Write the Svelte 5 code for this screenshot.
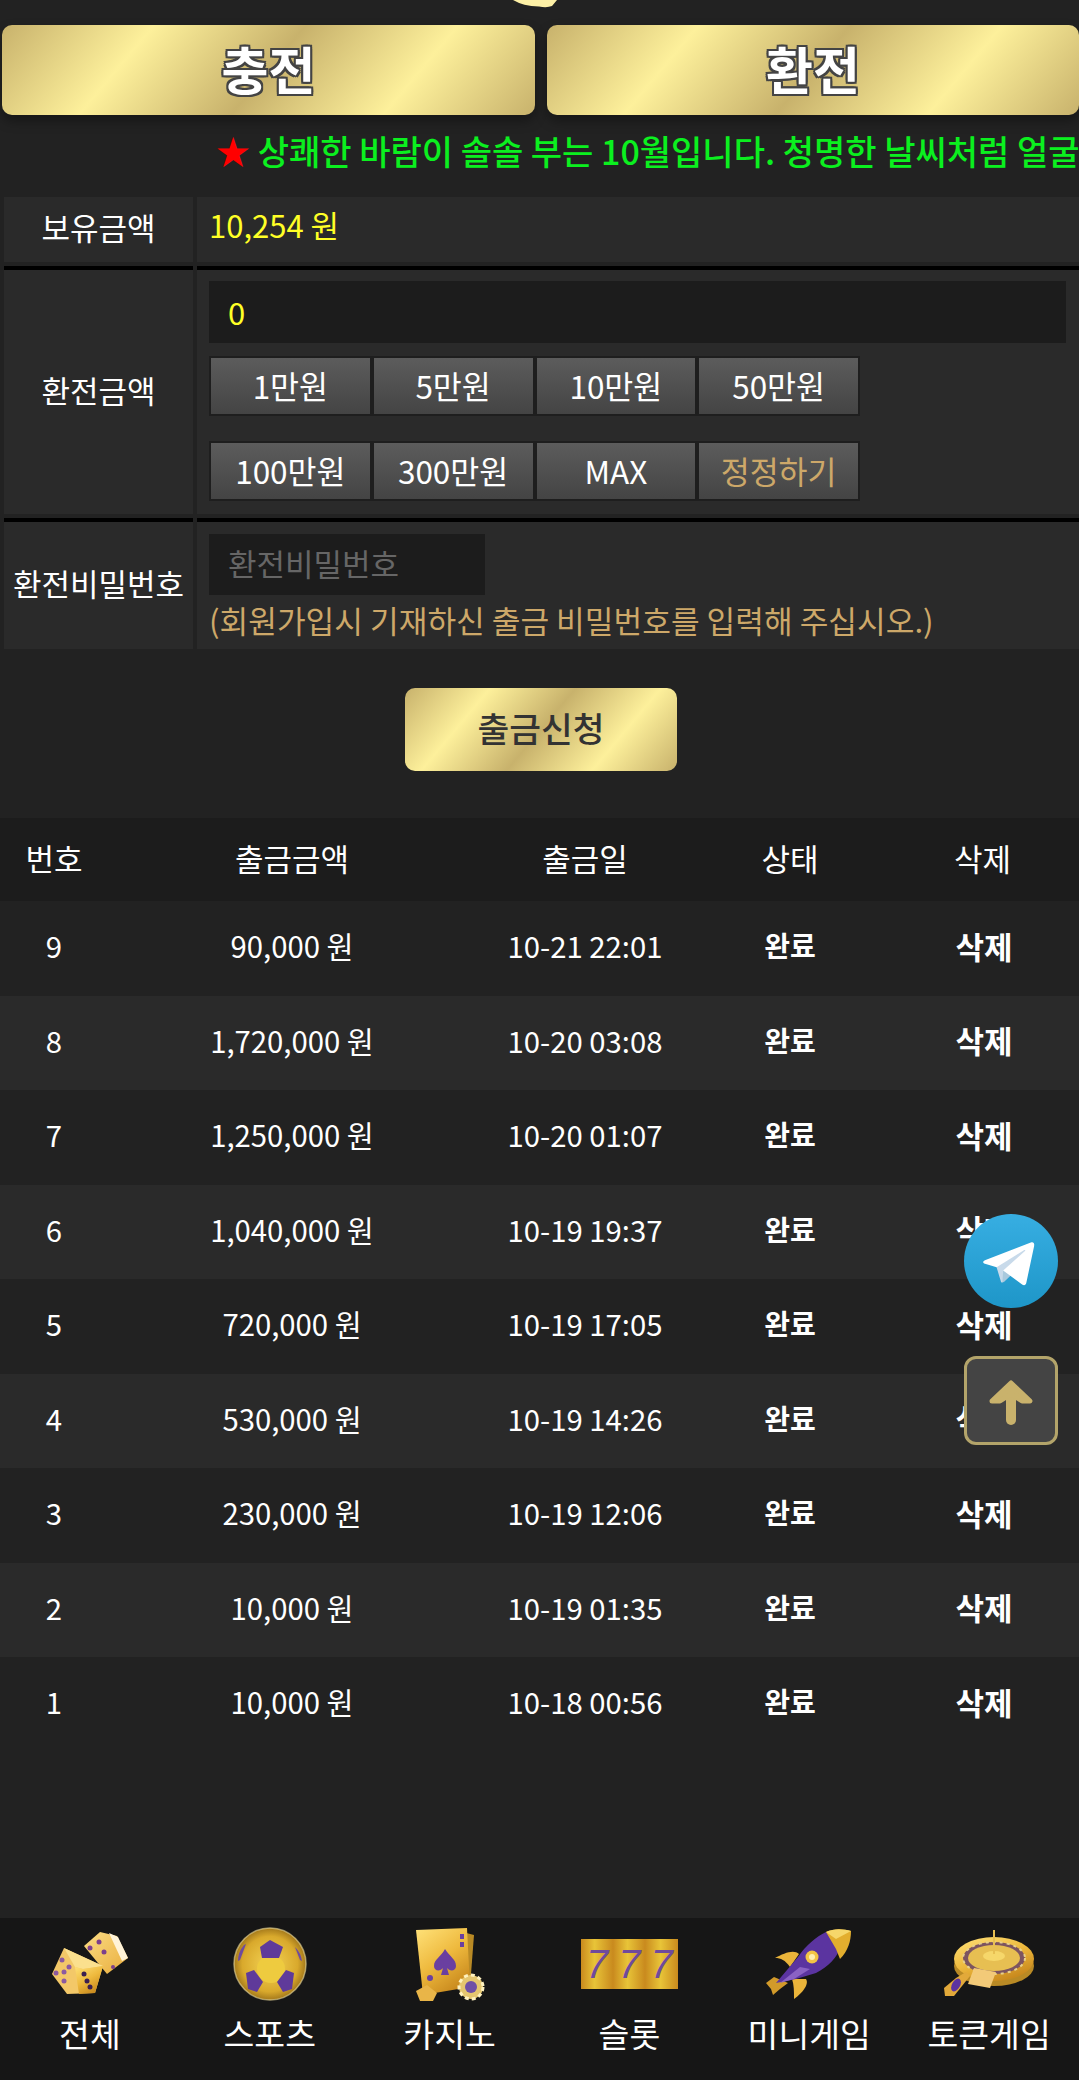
<script>
	const amounts = ['1만원', '5만원', '10만원', '50만원', '100만원', '300만원', 'MAX'];

	const rows = [
		{ no: 9, amount: '90,000 원', date: '10-21 22:01' },
		{ no: 8, amount: '1,720,000 원', date: '10-20 03:08' },
		{ no: 7, amount: '1,250,000 원', date: '10-20 01:07' },
		{ no: 6, amount: '1,040,000 원', date: '10-19 19:37' },
		{ no: 5, amount: '720,000 원', date: '10-19 17:05' },
		{ no: 4, amount: '530,000 원', date: '10-19 14:26' },
		{ no: 3, amount: '230,000 원', date: '10-19 12:06' },
		{ no: 2, amount: '10,000 원', date: '10-19 01:35' },
		{ no: 1, amount: '10,000 원', date: '10-18 00:56' }
	];
</script>

<svg class="defs" width="0" height="0" aria-hidden="true">
	<defs>
		<linearGradient id="gold" x1="0" y1="0" x2="0.6" y2="1">
			<stop offset="0" stop-color="#ffe27a" />
			<stop offset="0.55" stop-color="#eeb93d" />
			<stop offset="1" stop-color="#c98a1e" />
		</linearGradient>
		<linearGradient id="pale" x1="0" y1="0" x2="1" y2="1">
			<stop offset="0" stop-color="#fbdc84" />
			<stop offset="1" stop-color="#e9ad3c" />
		</linearGradient>
		<radialGradient id="ball" cx="0.5" cy="0.5" r="0.55">
			<stop offset="0" stop-color="#f4d455" />
			<stop offset="0.7" stop-color="#d9a92c" />
			<stop offset="1" stop-color="#8d6414" />
		</radialGradient>
		<linearGradient id="tg" x1="0.5" y1="0" x2="0.5" y2="1">
			<stop offset="0" stop-color="#37aee2" />
			<stop offset="1" stop-color="#1e96c8" />
		</linearGradient>
	</defs>
</svg>

<main>
	<svg class="coin" width="44" height="8" viewBox="0 0 44 8" aria-hidden="true">
		<path d="M0 0 H44 L39 6 Q34 8 26 6.500 Q10 6 0 0 Z" fill="#fdf0a6" />
	</svg>

	<div class="tabs">
		<button class="gold tab">충전</button>
		<button class="gold tab">환전</button>
	</div>

	<div class="notice"><span class="star">★</span> 상쾌한 바람이 솔솔 부는 10월입니다. 청명한 날씨처럼 얼굴</div>

	<div class="form">
		<div class="label first">보유금액</div>
		<div class="field first balance">10,254 원</div>

		<div class="label">환전금액</div>
		<div class="field exchange">
			<input class="amount" value="0" />
			<div class="chips">
				{#each amounts as a}
					<button class="chip">{a}</button>
				{/each}
				<button class="chip reset">정정하기</button>
			</div>
		</div>

		<div class="label">환전비밀번호</div>
		<div class="field password">
			<input class="pw" placeholder="환전비밀번호" />
			<p>(회원가입시 기재하신 출금 비밀번호를 입력해 주십시오.)</p>
		</div>
	</div>

	<div class="submit-wrap">
		<button class="gold submit">출금신청</button>
	</div>

	<div class="list">
		<div class="row head">
			<div>번호</div>
			<div>출금금액</div>
			<div>출금일</div>
			<div>상태</div>
			<div>삭제</div>
		</div>
		{#each rows as r}
			<div class="row">
				<div>{r.no}</div>
				<div>{r.amount}</div>
				<div>{r.date}</div>
				<div class="done">완료</div>
				<div class="del">삭제</div>
			</div>
		{/each}
	</div>
</main>

<a class="float telegram" href="#top" aria-label="telegram">
	<svg viewBox="0 0 240 240" width="94" height="96">
		<circle cx="120" cy="120" r="120" fill="url(#tg)" />
		<path fill="#c8daea" d="M98 175c-3.888 0-3.227-1.468-4.568-5.17L82 132.207 170 80" />
		<path fill="#a9c9dd" d="M98 175c3 0 4.325-1.372 6-3l16-15.558-19.958-12.035" />
		<path fill="#fff" d="M100.04 144.41l48.36 35.729c5.519 3.045 9.501 1.468 10.876-5.123l19.685-92.763c2.015-8.08-3.08-11.746-8.36-9.349l-115.59 44.571c-7.89 3.165-7.843 7.567-1.438 9.528l29.663 9.259 68.673-43.325c3.242-1.966 6.218-.91 3.776 1.258" />
	</svg>
</a>

<a class="float up" href="#top" aria-label="top">
	<svg viewBox="0 0 50 50" width="50" height="50">
		<path d="M25 44 V12" fill="none" stroke="#c9b26c" stroke-width="10" stroke-linecap="round" />
		<path d="M6 25 L25 7 L44 25 L36 25 L25 18 L14 25 Z" fill="#c9b26c" stroke="#c9b26c" stroke-width="5" stroke-linejoin="round" />
	</svg>
</a>

<nav>
	<div class="nav-item">
		<div class="icon">
			<svg width="78" height="66" viewBox="0 0 78 66">
				<path d="M49 1 L66 5 L77 27 L56 43 L33 15 Z" fill="url(#pale)" />
				<path d="M58 2 L67 6 L77 27 L71 30 Z" fill="#fff3d8" />
				<circle cx="48" cy="11" r="2.500" fill="#7d3f8c" />
				<circle cx="39" cy="17" r="2.500" fill="#7d3f8c" />
				<circle cx="53" cy="21" r="2.500" fill="#7d3f8c" />
				<circle cx="62" cy="36" r="2" fill="#7d3f8c" />
				<path d="M13 17 L52 35 L44 62 L16 63 L1 43 Z" fill="#f3c868" />
				<path d="M13 17 L52 35 L32 38 L24 36 Z" fill="#fbe08e" />
				<path d="M24 36 L32 38 L52 35 L44 62 L28 63 Z" fill="url(#gold)" />
				<circle cx="11" cy="29" r="2.500" fill="#8c5aa0" />
				<circle cx="5" cy="42" r="2.500" fill="#8c5aa0" />
				<circle cx="13" cy="41" r="2.500" fill="#8c5aa0" />
				<circle cx="18" cy="36" r="2.500" fill="#8c5aa0" />
				<circle cx="13" cy="50" r="2.500" fill="#8c5aa0" />
				<circle cx="33" cy="43" r="2.500" fill="#3c2050" />
				<circle cx="36" cy="50" r="2.500" fill="#3c2050" />
				<circle cx="39" cy="56" r="2.500" fill="#3c2050" />
			</svg>
		</div>
		<span>전체</span>
	</div>

	<div class="nav-item">
		<div class="icon">
			<svg width="74" height="74" viewBox="0 0 74 74">
				<circle cx="37" cy="37" r="36" fill="url(#ball)" />
				<circle cx="37" cy="37" r="36" fill="none" stroke="#f4e3a0" stroke-width="1.500" stroke-opacity="0.6" />
				<circle cx="38" cy="42" r="14" fill="#eecb3f" />
				<path d="M37 13 L50 20 L46 31 L29 31 L27 20 Z" fill="#5f3a9a" />
				<path d="M13 46 L21 43 L30 55 L24 65 L15 62 Z" fill="#5f3a9a" />
				<path d="M61 46 L53 43 L44 55 L50 65 L59 62 Z" fill="#5f3a9a" />
				<path d="M7 33 L13 17 L11 18 Q5 25 5 34 Z" fill="#6e4aa0" />
				<path d="M67 33 L62 20 Q68 26 69 34 Z" fill="#6e4aa0" />
			</svg>
		</div>
		<span>스포츠</span>
	</div>

	<div class="nav-item">
		<div class="icon">
			<svg width="70" height="74" viewBox="0 0 70 74">
				<path d="M40 3 L59 8 L55 60 L30 60 Z" fill="#b98a25" />
				<path d="M1 3 L52 1 L55 60 L8 68 Z" fill="url(#gold)" />
				<path d="M30 22 C35 30 41 32 41 39 C41 44 35 45 32 41 L34 48 L26 48 L28 41 C25 45 19 44 19 39 C19 32 26 30 30 22 Z" fill="#6a3fa0" />
				<rect x="45" y="7" width="4" height="5" fill="#6a3fa0" />
				<rect x="45" y="15" width="4" height="5" fill="#6a3fa0" />
				<path d="M1 64 L12 58 L22 66 L18 74 L5 74 Z" fill="#e9b548" />
				<circle cx="15" cy="51" r="3" fill="#6a3fa0" />
				<circle cx="56" cy="60" r="12" fill="#e5c66f" />
				<circle cx="56" cy="60" r="12" fill="none" stroke="#fff2c0" stroke-width="3" stroke-dasharray="4 3" />
				<circle cx="56" cy="60" r="6" fill="#6f4fa6" />
			</svg>
		</div>
		<span>카지노</span>
	</div>

	<div class="nav-item">
		<div class="icon">
			<div class="slot">
				<b>7</b><b>7</b><b>7</b>
			</div>
		</div>
		<span>슬롯</span>
	</div>

	<div class="nav-item">
		<div class="icon">
			<svg width="86" height="70" viewBox="0 0 86 70">
				<path d="M8 48 L0 54 L5 60 L7 66 L14 60 L22 54 Z" fill="#d29a2a" />
				<path d="M33 25 C28 20 18 24 9 29 C15 29 19 31 24 38 Z" fill="#eab43a" />
				<path d="M40 50 C44 56 34 66 28 70 C28 62 28 56 26 50 Z" fill="#eab43a" />
				<path d="M10 54 L32 28 C40 16 50 8 60 3 L74 18 C72 28 62 38 50 44 L30 50 Z" fill="#5b34a0" />
				<path d="M14 54 L34 38 L44 40 L28 50 Z" fill="#8a62c4" />
				<path d="M60 3 C68 -1 78 0 85 2 C85 12 82 22 74 30 L70 20 Z" fill="#e3ae2e" />
				<path d="M60 3 C68 -1 78 0 85 2 L70 10 Z" fill="#f6d76a" />
				<circle cx="46" cy="28" r="6.500" fill="#f3c445" />
				<circle cx="46" cy="28" r="3" fill="#fff0b0" />
			</svg>
		</div>
		<span>미니게임</span>
	</div>

	<div class="nav-item">
		<div class="icon">
			<svg width="90" height="68" viewBox="0 0 90 68">
				<ellipse cx="50" cy="36" rx="40" ry="20" fill="#b98a25" />
				<ellipse cx="50" cy="29" rx="40" ry="22" fill="url(#gold)" />
				<ellipse cx="50" cy="28" rx="31" ry="16" fill="#7c5460" />
				<ellipse cx="50" cy="28" rx="31" ry="16" fill="none" stroke="#e8d08a" stroke-width="2" stroke-dasharray="3 4" />
				<ellipse cx="50" cy="28" rx="26" ry="13" fill="#e7bf52" />
				<ellipse cx="50" cy="26" rx="11" ry="5" fill="#f6d76a" />
				<path d="M49 0 H51 V24 H49 Z" fill="#e7bf52" />
				<path d="M30 38 L52 42 L46 58 L24 54 Z" fill="#f3ca78" />
				<path d="M12 48 L22 42 L26 46 L10 66 L1 66 L0 58 Z" fill="#e2a93a" />
				<ellipse cx="12" cy="55" rx="4" ry="7" fill="#5b34a0" transform="rotate(30 12 55)" />
			</svg>
		</div>
		<span>토큰게임</span>
	</div>
</nav>

<style>
	:global(body) {
		background: #222;
		font-family: "Noto Sans CJK KR", "Noto Sans", sans-serif;
		color: #fff;
	}

	.defs {
		position: absolute;
	}

	main {
		position: relative;
		padding-top: 25px;
		height: 2055px;
		overflow: hidden;
	}

	.coin {
		position: absolute;
		top: 0;
		left: 513px;
	}

	button {
		font-family: inherit;
		cursor: pointer;
		padding: 0;
	}

	.gold {
		border: none;
		background: linear-gradient(130deg, #c8b26c 0%, #fdf09b 25%, #c8b26c 50%, #fdf09b 75%, #c8b26c 100%);
	}

	.tabs {
		display: grid;
		grid-template-columns: 533px 532px;
		gap: 12px;
		padding-left: 2px;
	}

	.tab {
		height: 90px;
		padding-bottom: 5px;
		border-radius: 10px;
		box-shadow: 0 6px 12px rgba(0, 0, 0, 0.35);
		color: #fff;
		font-size: 51px;
		font-weight: 700;
		text-shadow: 2px 0 0 #444, -2px 0 0 #444, 0 2px 0 #444, 0 -2px 0 #444, 2px 2px 0 #444, -2px -2px 0 #444, 2px -2px 0 #444, -2px 2px 0 #444;
	}

	.notice {
		height: 82px;
		line-height: 72px;
		padding-left: 216px;
		white-space: nowrap;
		overflow: hidden;
		color: #0bf01f;
		font-size: 34px;
		font-weight: 500;
	}

	.star {
		color: #f00;
	}

	.form {
		display: grid;
		grid-template-columns: 189px 1fr;
		gap: 4px;
		padding-left: 4px;
	}

	.label,
	.field {
		background: #2a2a2a;
		border-top: 4px solid #000;
		font-size: 31px;
	}

	.label {
		display: flex;
		align-items: center;
		justify-content: center;
		padding-bottom: 6px;
	}

	.first {
		border-top: none;
	}

	.field {
		padding: 0 12px;
	}

	.balance {
		display: flex;
		align-items: center;
		box-sizing: border-box;
		height: 65px;
		padding-bottom: 10px;
		color: #ffff26;
	}

	input {
		display: block;
		box-sizing: border-box;
		border: none;
		outline: none;
		background: #1c1c1c;
		font-family: inherit;
		font-size: 31px;
		padding: 0 19px 4px;
	}

	input::placeholder {
		color: #666;
	}

	.amount {
		width: 857px;
		height: 62px;
		margin-top: 11px;
		padding-bottom: 2px;
		color: #ffff26;
	}

	.chips {
		display: grid;
		grid-template-columns: repeat(4, 162.75px);
		grid-auto-rows: 60px;
		row-gap: 25px;
		padding: 13px 0;
	}

	.chip {
		border: 2px solid #1e1e1e;
		padding-bottom: 3px;
		background: linear-gradient(#5c5c5c, #444);
		color: #fff;
		font-size: 31.500px;
	}

	.reset {
		color: #cda869;
	}

	.pw {
		width: 276px;
		height: 61px;
		margin-top: 12px;
	}

	.password p {
		margin: 0;
		height: 54px;
		line-height: 50px;
		color: #cda869;
		font-size: 31.200px;
		white-space: nowrap;
	}

	.submit-wrap {
		display: flex;
		justify-content: center;
		padding: 39px 0 47px 3px;
	}

	.submit {
		width: 272px;
		height: 83px;
		padding-bottom: 5px;
		border-radius: 10px;
		color: #333;
		font-size: 34.500px;
		font-weight: 500;
	}

	.row {
		display: grid;
		grid-template-columns: 108px 368px 218px 192px 1fr;
		box-sizing: border-box;
		height: 94.5px;
		padding-bottom: 6px;
		align-items: center;
		text-align: center;
		font-size: 29.300px;
	}

	.row:nth-child(odd):not(.head) {
		background: #2a2a2a;
	}

	.head {
		height: 83px;
		padding-bottom: 5px;
		background: #1c1c1c;
		font-size: 31px;
	}

	.done {
		font-weight: 700;
		font-size: 28px;
	}

	.del {
		font-weight: 700;
		font-size: 31px;
		padding-left: 3px;
	}

	.float {
		position: fixed;
		left: 964px;
		display: flex;
		align-items: center;
		justify-content: center;
	}

	.telegram {
		top: 1213px;
		width: 94px;
		height: 96px;
	}

	.up {
		top: 1356px;
		box-sizing: border-box;
		width: 94px;
		height: 89px;
		border: 3px solid #b3a46a;
		border-radius: 12px;
		background: #444;
	}

	nav {
		position: fixed;
		left: 0;
		right: 0;
		bottom: 0;
		height: 162px;
		display: grid;
		grid-template-columns: repeat(6, 1fr);
		background: #161616;
	}

	.nav-item {
		display: flex;
		flex-direction: column;
		align-items: center;
		font-size: 33.500px;
		line-height: 46px;
	}

	.icon {
		height: 92px;
		display: flex;
		align-items: center;
		justify-content: center;
	}

	.slot {
		display: grid;
		grid-template-columns: repeat(3, 1fr);
		width: 97px;
		height: 50px;
		background: linear-gradient(90deg, #c98a1e, #e8c438 14%, #c98a1e 33%, #e8c438 48%, #c98a1e 66%, #e8c438 82%, #c98a1e);
	}

	.slot b {
		text-align: center;
		color: #6f4a9c;
		font-family: "Liberation Sans", sans-serif;
		font-style: italic;
		font-weight: 400;
		font-size: 40px;
		line-height: 50px;
	}
</style>
